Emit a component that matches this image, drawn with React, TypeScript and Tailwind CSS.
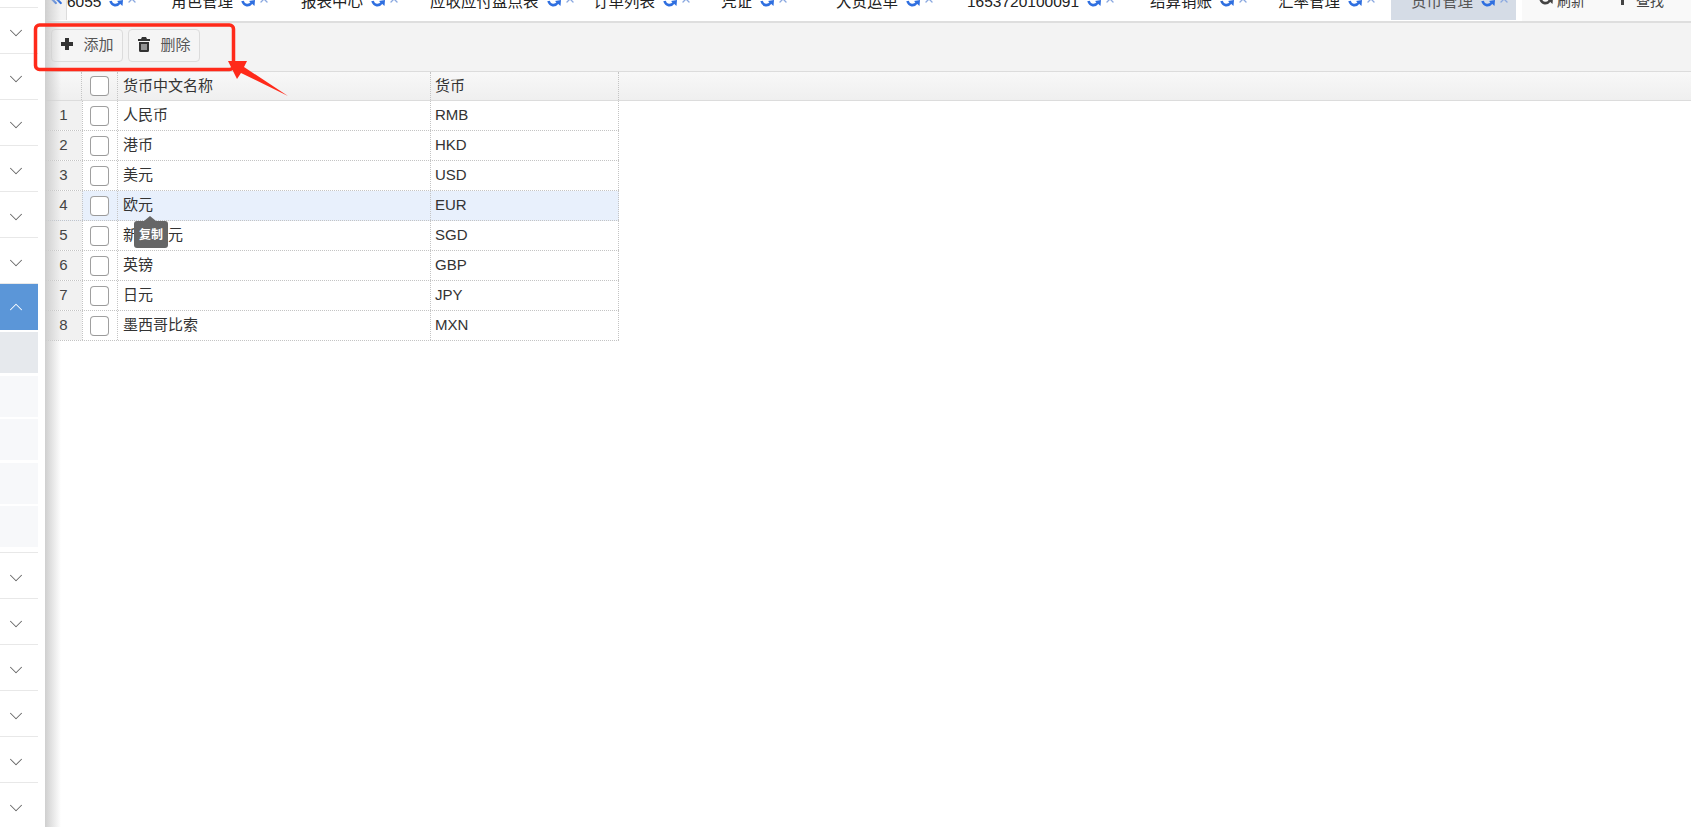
import { ChevronDown, ChevronUp, X, ChevronsLeft } from "lucide-react";

const tabs = [
  { t: "6055", w: 104 },
  { t: "角色管理", w: 130 },
  { t: "报表中心", w: 129 },
  { t: "应收应付盘点表", w: 163 },
  { t: "订单列表", w: 128 },
  { t: "凭证", w: 115 },
  { t: "大货运单", w: 131 },
  { t: "1653720100091", w: 183 },
  { t: "结算销账", w: 128 },
  { t: "汇率管理", w: 113 },
];

const rows = [
  ["人民币", "RMB"],
  ["港币", "HKD"],
  ["美元", "USD"],
  ["欧元", "EUR"],
  ["新加坡元", "SGD"],
  ["英镑", "GBP"],
  ["日元", "JPY"],
  ["墨西哥比索", "MXN"],
];

function Chevron() {
  return (
    <div className="h-[46px] pt-[5px] pl-[5px] flex items-center border-b border-[#e8e8e8] mr-[7px]">
      <ChevronDown className="w-[22px] h-[22px] text-[#666]" strokeWidth={1.1} />
    </div>
  );
}

function Box() {
  return <div className="w-[19px] h-[20px] rounded-[4px] border border-[#a0a0a0] border-b-[#999] bg-white" />;
}

function RefreshArc({ className }: { className: string }) {
  return (
    <svg width="14" height="8" viewBox="0 0 14 8" className={className}>
      <path d="M1.5 1 C3 6 8 6.5 11 2.5" stroke="currentColor" strokeWidth="2.6" fill="none" />
      <path d="M8 1 L14 0 L13.5 6 Z" fill="currentColor" />
    </svg>
  );
}

function TabIcons() {
  return (
    <span className="flex items-center gap-[3px] ml-[8px]">
      <RefreshArc className="text-[#2f6fe0] translate-y-[2px]" />
      <X className="w-[12px] h-[12px] text-[#8aa8e0] -translate-y-[3px]" strokeWidth={2.6} />
    </span>
  );
}

function PlusIcon() {
  return (
    <svg width="14" height="14" viewBox="0 0 14 14" className="text-[#333] -mt-[3px]">
      <path d="M5 1h4v4h4v4H9v4H5V9H1V5h4z" fill="currentColor" />
    </svg>
  );
}

function TrashIcon() {
  return (
    <svg width="14" height="15" viewBox="0 0 14 15" className="text-[#333] -mt-[3px]">
      <path
        d="M5 0h4l1 2h3v2H1V2h3zM2 5h10v8.5a1.5 1.5 0 0 1-1.5 1.5h-7A1.5 1.5 0 0 1 2 13.5zM4.5 7v6h1V7zM6.5 7v6h1V7zM8.5 7v6h1V7z"
        fill="currentColor"
        fillRule="evenodd"
      />
    </svg>
  );
}

export default function App() {
  return (
    <div className="relative w-[1691px] h-[827px] overflow-hidden bg-white flex text-[15px] text-[#333] font-['Liberation_Sans','Noto_Sans_CJK_SC',sans-serif]">
      <aside className="w-[45px] shrink-0 bg-white pt-[7px]">
        <div className="border-t border-[#e8e8e8] mr-[7px]" />
        {[0, 1, 2, 3, 4, 5].map((i) => (
          <Chevron key={i} />
        ))}
        <div className="h-[46px] mr-[7px] pl-[5px] bg-[#5b96d8] flex items-center">
          <ChevronUp className="w-[22px] h-[22px] text-white" strokeWidth={1.1} />
        </div>
        <div className="mr-[7px] mt-[2px] flex flex-col gap-[2.5px] pb-[5px] border-b border-[#e8e8e8]">
          <div className="h-[41px] bg-[#e6e9ed]" />
          <div className="h-[41px] bg-[#f7f8fa]" />
          <div className="h-[41px] bg-[#f7f8fa]" />
          <div className="h-[41px] bg-[#f7f8fa]" />
          <div className="h-[41px] bg-[#f7f8fa]" />
        </div>
        {[0, 1, 2, 3, 4, 5].map((i) => (
          <Chevron key={i} />
        ))}
      </aside>

      <main className="relative flex-1 min-w-0 flex flex-col">
        <div className="pointer-events-none absolute left-0 top-0 bottom-0 w-[16px] bg-gradient-to-r from-[#cfcfcf] to-transparent" />

        <header className="h-[23px] shrink-0 flex border-b-2 border-[#dedede] overflow-hidden text-[#222] text-[15.5px] leading-[20px]">
          <div className="w-[22px] h-[20px] shrink-0 bg-[#f3f3f3] border-r border-[#dcdcdc]">
            <ChevronsLeft className="w-[17px] h-[17px] text-[#2f6fe0] ml-[3px] -mt-[9px]" strokeWidth={3} />
          </div>
          <div className="flex items-start shrink-0 -mt-[8px]">
            {tabs.map((tab) => (
              <div key={tab.t} className="flex items-center h-[20px] shrink-0" style={{ width: tab.w }}>
                <span>{tab.t}</span>
                <TabIcons />
              </div>
            ))}
          </div>
          <div className="h-[20px] w-[125px] shrink-0 pl-[20px] bg-[#d5dce6] text-[#555]">
            <span className="flex items-center -mt-[8px] h-[20px]">
              货币管理
              <TabIcons />
            </span>
          </div>
          <div className="flex-1 bg-[#f9f9f9] ml-[6px] flex items-start text-[14px] text-[#444]">
            <span className="flex items-center gap-[4px] pl-[17px] -mt-[9px] h-[20px]">
              <RefreshArc className="translate-y-[1px]" />
              刷新
            </span>
            <span className="flex items-center gap-[12px] pl-[36px] -mt-[9px] h-[20px]">
              <span className="w-[3px] h-[8px] bg-[#444]" />
              查找
            </span>
          </div>
        </header>

        <div className="h-[48px] shrink-0 bg-[#f3f3f3] flex items-start gap-[5px] pl-[6px] pt-[6px]">
          <button className="h-[33px] w-[72px] flex items-center justify-center gap-[9px] rounded-[4px] border border-[#dcdcdc] bg-[#f5f5f5] text-[#555]">
            <PlusIcon />
            添加
          </button>
          <button className="h-[33px] w-[72px] flex items-center justify-center gap-[9px] rounded-[4px] border border-[#dcdcdc] bg-[#f5f5f5] text-[#555]">
            <TrashIcon />
            删除
          </button>
        </div>

        <div className="h-[30px] shrink-0 flex border-y border-[#dcdcdc] bg-gradient-to-b from-[#f8f8f8] to-[#efefef]">
          <div className="w-[37px] border-r border-dotted border-[#c4c4c4]" />
          <div className="w-[36px] border-r border-dotted border-[#c4c4c4] flex items-center pl-[8px]">
            <Box />
          </div>
          <div className="w-[313px] border-r border-dotted border-[#c4c4c4] flex items-center pl-[5px]">货币中文名称</div>
          <div className="w-[188px] border-r border-dotted border-[#c4c4c4] flex items-center pl-[4px]">货币</div>
        </div>

        <div className="w-[574px]">
          {rows.map(([name, code], i) => (
            <div key={code} className={`h-[30px] flex border-b border-dotted border-[#c4c4c4] ${i === 3 ? "bg-[#e8f0fc]" : "bg-white"}`}>
              <div className="w-[37px] shrink-0 bg-[#f1f1f1] flex items-center justify-center text-[#444]">{i + 1}</div>
              <div className="w-[36px] shrink-0 border-x border-dotted border-[#c4c4c4] flex items-center pl-[7px]">
                <Box />
              </div>
              <div className="w-[313px] shrink-0 border-r border-dotted border-[#c4c4c4] flex items-center pl-[5px]">{name}</div>
              <div className="w-[188px] shrink-0 border-r border-dotted border-[#c4c4c4] flex items-center pl-[4px]">{code}</div>
            </div>
          ))}
        </div>

        <div className="absolute left-[89px] top-[221px] w-[34px] h-[27px] rounded-[3px] bg-[#666] text-white text-[12px] font-bold flex items-center justify-center">
          复制
          <span className="absolute -top-[5px] left-[10px] border-x-[6px] border-x-transparent border-b-[5px] border-b-[#666]" />
        </div>

        <svg className="absolute left-[-12px] top-[0px]" width="290" height="100" viewBox="0 0 290 100" fill="none">
          <rect x="2.5" y="25" width="198" height="44.5" rx="4" stroke="#ff2a1a" strokeWidth="3.5" />
          <path d="M195 61 L214 61 L211 67 L255 96 L208 73 L204 79 Z" fill="#ff2a1a" />
        </svg>
      </main>
    </div>
  );
}
